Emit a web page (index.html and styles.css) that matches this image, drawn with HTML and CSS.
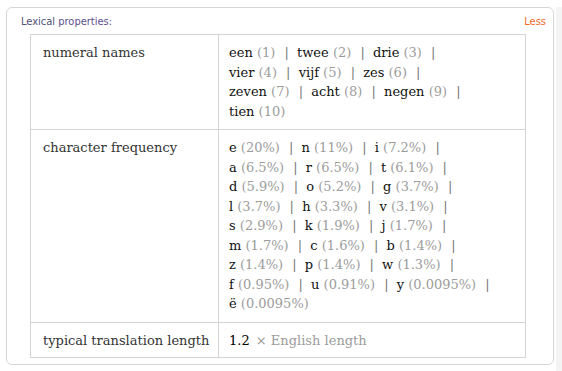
FILE: index.html
```html
<!DOCTYPE html>
<html>
<head>
<meta charset="utf-8">
<link rel="stylesheet" href="styles.css">
</head>
<body>
<div class="page">
  <div class="pod">
    <div class="pod-head">
      <span class="title"><span class="t1">Lexical</span> <span class="t2">properties:</span></span>
      <span class="less">Less</span>
    </div>
    <table class="grid">
      <colgroup><col class="c1"><col class="c2"></colgroup>
      <tr class="r1">
        <td class="k">numeral names</td>
        <td class="v">
          <div>een <i>(1)</i> <b>|</b> twee <i>(2)</i> <b>|</b> drie <i>(3)</i> <b>|</b></div>
          <div>vier <i>(4)</i> <b>|</b> vijf <i>(5)</i> <b>|</b> zes <i>(6)</i> <b>|</b></div>
          <div>zeven <i>(7)</i> <b>|</b> acht <i>(8)</i> <b>|</b> negen <i>(9)</i> <b>|</b></div>
          <div>tien <i>(10)</i></div>
        </td>
      </tr>
      <tr class="r2">
        <td class="k">character frequency</td>
        <td class="v">
          <div>e <i>(20%)</i> <b>|</b> n <i>(11%)</i> <b>|</b> i <i>(7.2%)</i> <b>|</b></div>
          <div>a <i>(6.5%)</i> <b>|</b> r <i>(6.5%)</i> <b>|</b> t <i>(6.1%)</i> <b>|</b></div>
          <div>d <i>(5.9%)</i> <b>|</b> o <i>(5.2%)</i> <b>|</b> g <i>(3.7%)</i> <b>|</b></div>
          <div>l <i>(3.7%)</i> <b>|</b> h <i>(3.3%)</i> <b>|</b> v <i>(3.1%)</i> <b>|</b></div>
          <div>s <i>(2.9%)</i> <b>|</b> k <i>(1.9%)</i> <b>|</b> j <i>(1.7%)</i> <b>|</b></div>
          <div>m <i>(1.7%)</i> <b>|</b> c <i>(1.6%)</i> <b>|</b> b <i>(1.4%)</i> <b>|</b></div>
          <div>z <i>(1.4%)</i> <b>|</b> p <i>(1.4%)</i> <b>|</b> w <i>(1.3%)</i> <b>|</b></div>
          <div>f <i>(0.95%)</i> <b>|</b> u <i>(0.91%)</i> <b>|</b> y <i>(0.0095%)</i> <b>|</b></div>
          <div>ë <i>(0.0095%)</i></div>
        </td>
      </tr>
      <tr class="r3">
        <td class="k">typical translation length</td>
        <td class="v"><span class="num">1.2</span> <i>× English length</i></td>
      </tr>
    </table>
  </div>
  <div class="side"></div>
</div>
</body>
</html>
```

FILE: styles.css
```css
html, body {
  margin: 0;
  padding: 0;
  background: #ffffff;
}
.page {
  display: flex;
  width: 562px;
  height: 371px;
  padding-top: 7px;
  box-sizing: border-box;
}
.pod {
  margin-left: 6px;
  width: 548px;
  height: 358px;
  box-sizing: border-box;
  border: 1px solid #d6d6d6;
  border-radius: 6px;
  padding: 7px 7px 0 23px;
}
.side {
  margin-left: 2px;
  flex: 1;
  background: #f4f4f4;
}
.pod-head {
  display: flex;
  justify-content: space-between;
  align-items: center;
  height: 12px;
  margin-left: -9px;
  font-family: "DejaVu Sans Condensed", "DejaVu Sans", sans-serif;
  font-size: 11px;
  margin-bottom: 7px;
}
.t1 { color: #4f4f72; }
.t2 { color: #5c4f92; }
.less { color: #f26a1f; }
.grid {
  border-collapse: collapse;
  table-layout: fixed;
  width: 496px;
  font-family: "DejaVu Serif", serif;
  font-size: 13px;
  color: #111111;
}
.c1 { width: 188px; }
.grid td {
  border: 1px solid #d4d4d4;
  vertical-align: top;
  line-height: 19.5px;
}
.k {
  padding: 8px 6px 8px 12px;
  color: #333333;
}
.v {
  padding: 8px 6px 8px 10px;
}
.r3 td { padding-top: 8px; padding-bottom: 7px; }
.v i {
  font-style: normal;
  color: #9c9c9c;
}
.v b {
  font-weight: normal;
  color: #777777;
  margin: 0 4px 0 5px;
}
.num { color: #000; margin-right: 2px; }
```
